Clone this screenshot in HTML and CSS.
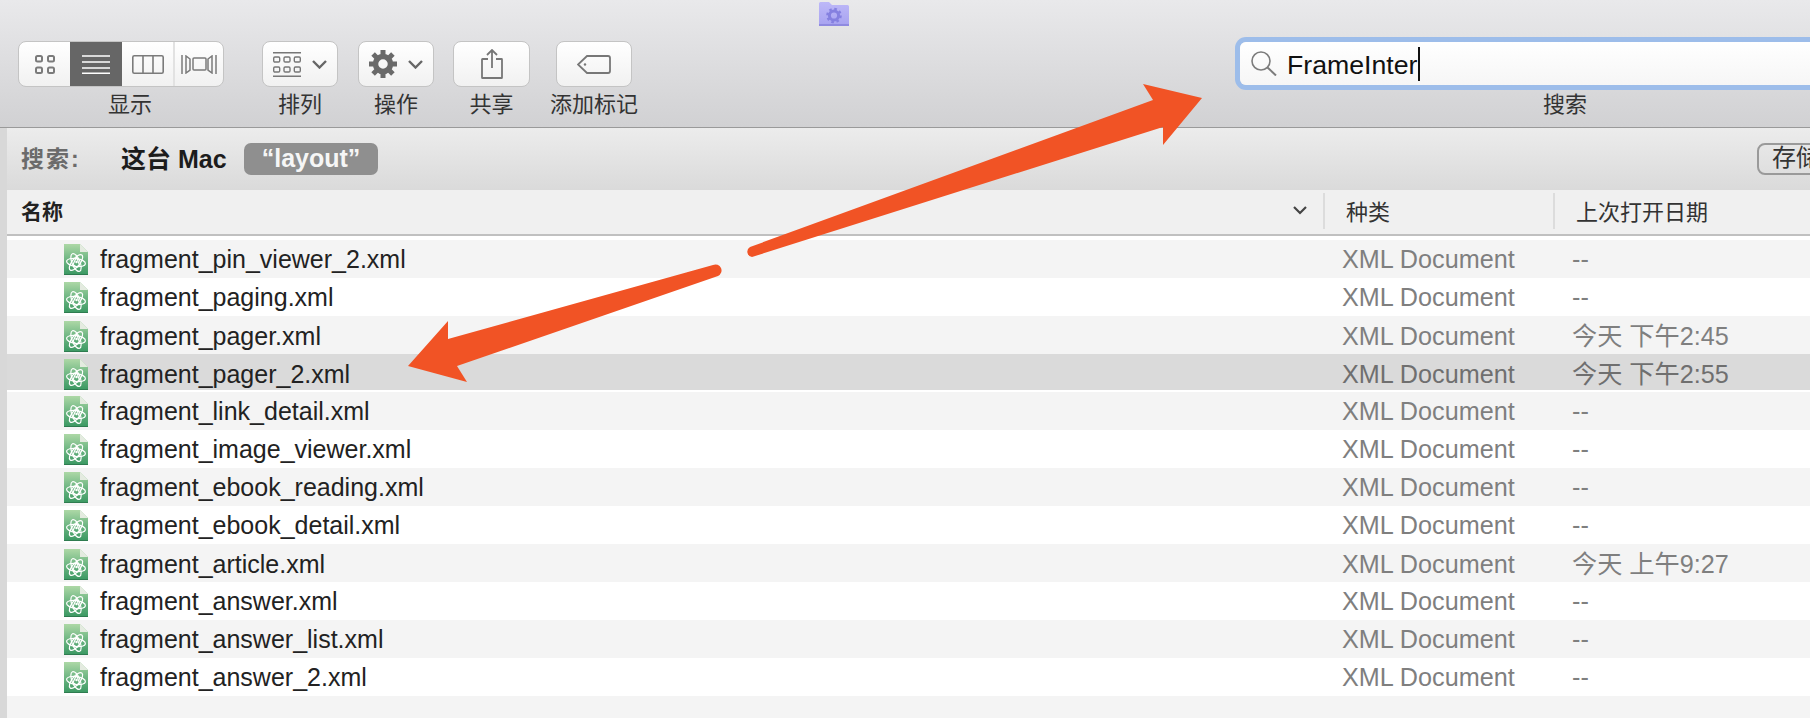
FILE: index.html
```html
<!DOCTYPE html>
<html lang="zh">
<head>
    <meta charset="UTF-8">
    <meta name="viewport" content="width=device-width, initial-scale=1.0">
    <title>搜索 FrameInter</title>
    <link rel="stylesheet" href="styles.css">
</head>
<body>

    <svg class="defs" width="0" height="0">
        <defs>
            <linearGradient id="verde" x1="0" y1="0" x2="0" y2="1">
                <stop offset="0" stop-color="#add8a6"/>
                <stop offset=".45" stop-color="#74b986"/>
                <stop offset="1" stop-color="#3a9862"/>
            </linearGradient>
            <linearGradient id="lila" x1="0" y1="0" x2="0" y2="1">
                <stop offset="0" stop-color="#bdb8f8"/>
                <stop offset="1" stop-color="#a7a2f0"/>
            </linearGradient>
            <symbol id="xml" viewBox="0 0 24 31">
                <path d="M0 0H16L24 8V31H0Z" fill="url(#verde)"/>
                <path d="M16 0L24 8H16Z" fill="#e4ebe0"/>
                <rect x="0" y="30" width="24" height="1" fill="#2f7c50"/>
                <g fill="none" stroke="#fff" stroke-width="1.2">
                    <ellipse cx="12" cy="18.5" rx="9.5" ry="4" transform="rotate(8 12 18.5)"/>
                    <ellipse cx="12" cy="18.5" rx="9.5" ry="4" transform="rotate(68 12 18.5)"/>
                    <ellipse cx="12" cy="18.5" rx="9.5" ry="4" transform="rotate(128 12 18.5)"/>
                    <path d="M9 20.5L12.5 13L15.5 21L12.5 23.5Z"/>
                </g>
                <circle cx="12.5" cy="18" r="1.2" fill="#fff"/>
            </symbol>
        </defs>
    </svg>

    <div class="barra">
        <div class="titulo">
            <svg width="30" height="24" viewBox="0 0 30 24">
                <path d="M0 1.5Q0 0 1.5 0H10L13 3H28.5Q30 3 30 4.5V22.5Q30 24 28.5 24H1.5Q0 24 0 22.5Z" fill="url(#lila)"/>
                <rect y="22" width="30" height="2" fill="#8f8ae0"/>
                <circle cx="15" cy="13.5" r="4.6" fill="none" stroke="#8580e0" stroke-width="3"/>
                <circle cx="15" cy="13.5" r="6.6" fill="none" stroke="#8580e0" stroke-width="2.4" stroke-dasharray="2.6 2.6"/>
            </svg>
        </div>
        <div class="herramientas">
            <div class="grupo">
                <div class="segmentos">
                    <div class="seg seg-1">
                        <svg width="20" height="19" viewBox="0 0 20 19" fill="none" stroke="#7b7b7b" stroke-width="2">
                            <rect x="1" y="1" width="6" height="5.5" rx="1.5"/><rect x="13" y="1" width="6" height="5.5" rx="1.5"/>
                            <rect x="1" y="12.5" width="6" height="5.5" rx="1.5"/><rect x="13" y="12.5" width="6" height="5.5" rx="1.5"/>
                        </svg>
                    </div>
                    <div class="seg seg-activo">
                        <svg width="28" height="19" viewBox="0 0 28 19" stroke="#fff" stroke-width="1.6">
                            <path d="M0 1H28M0 7H28M0 13H28M0 18.2H28"/>
                        </svg>
                    </div>
                    <div class="seg seg-3">
                        <svg width="32" height="19" viewBox="0 0 32 19" fill="none" stroke="#7b7b7b" stroke-width="1.6">
                            <rect x=".8" y=".8" width="30.4" height="17.4" rx="1.5"/><path d="M11 1V18M21 1V18"/>
                        </svg>
                    </div>
                    <div class="seg seg-4">
                        <svg width="36" height="19" viewBox="0 0 36 19" fill="none" stroke="#7b7b7b" stroke-width="1.5">
                            <path d="M1 0V19M5 1V18L9 15V4Z"/><rect x="12" y="3" width="13" height="12" rx="1"/>
                            <path d="M31 1V18L27 15V4ZM35 0V19"/>
                        </svg>
                    </div>
                </div>
                <span class="etiqueta etiqueta-vista">显示</span>
            </div>
            <div class="grupo grupo-orden">
                <div class="boton">
                    <svg width="28" height="25" viewBox="0 0 28 25" fill="none" stroke="#777" stroke-width="1.4">
                        <path d="M0 .8H28M0 24.2H28"/>
                        <rect x=".7" y="5" width="6" height="5" rx="1.2"/><rect x="11" y="5" width="6" height="5" rx="1.2"/><rect x="21.3" y="5" width="6" height="5" rx="1.2"/>
                        <rect x=".7" y="15" width="6" height="5" rx="1.2"/><rect x="11" y="15" width="6" height="5" rx="1.2"/><rect x="21.3" y="15" width="6" height="5" rx="1.2"/>
                    </svg>
                    <svg class="flecha" width="15" height="9" viewBox="0 0 15 9" fill="none" stroke="#666" stroke-width="2.4">
                        <path d="M1 1L7.5 7.5L14 1"/>
                    </svg>
                </div>
                <span class="etiqueta">排列</span>
            </div>
            <div class="grupo grupo-accion">
                <div class="boton">
                    <svg width="28" height="28" viewBox="0 0 28 28" fill="none" stroke="#6a6a6a">
                        <circle cx="14" cy="14" r="7.5" stroke-width="5.5"/>
                        <path d="M14 0V6M14 22V28M0 14H6M22 14H28M4.1 4.1L8.3 8.3M19.7 19.7L23.9 23.9M4.1 23.9L8.3 19.7M19.7 8.3L23.9 4.1" stroke-width="5"/>
                    </svg>
                    <svg class="flecha" width="15" height="9" viewBox="0 0 15 9" fill="none" stroke="#666" stroke-width="2.4">
                        <path d="M1 1L7.5 7.5L14 1"/>
                    </svg>
                </div>
                <span class="etiqueta">操作</span>
            </div>
            <div class="grupo grupo-compartir">
                <div class="boton boton-ancho">
                    <svg width="22" height="30" viewBox="0 0 22 30" fill="none" stroke="#777" stroke-width="1.8">
                        <path d="M7 10H1.5Q1 10 1 10.5V28.4Q1 29 1.5 29H20.5Q21 29 21 28.4V10.5Q21 10 20.5 10H15"/>
                        <path d="M11 19V1M6 6L11 1L16 6"/>
                    </svg>
                </div>
                <span class="etiqueta">共享</span>
            </div>
            <div class="grupo grupo-marca">
                <div class="boton">
                    <svg width="34" height="19" viewBox="0 0 34 19" fill="none" stroke="#777" stroke-width="1.8">
                        <path d="M10 1H31Q33 1 33 3V16Q33 18 31 18H10L1 9.5Z"/>
                        <circle cx="8" cy="9.5" r="1.2" fill="#777" stroke="none"/>
                    </svg>
                </div>
                <span class="etiqueta">添加标记</span>
            </div>
            <div class="grupo grupo-buscar">
                <div class="buscador">
                    <svg width="26" height="25" viewBox="0 0 26 25" fill="none" stroke="#7c7c7c" stroke-width="1.6">
                        <circle cx="10" cy="10" r="9"/><path d="M16.5 16.5L25 24.5" stroke-width="2"/>
                    </svg>
                    <span class="busqueda">FrameInter</span>
                    <span class="cursor"></span>
                </div>
                <span class="etiqueta">搜索</span>
            </div>
        </div>
    </div>

    <div class="cuerpo">
        <div class="borde"></div>
        <div class="principal">
            <div class="filtro">
                <span class="filtro-titulo">搜索:</span>
                <span class="filtro-lugar">这台 Mac</span>
                <span class="pastilla">“layout”</span>
                <span class="guardar">存储</span>
            </div>
            <div class="cabecera">
                <div class="col-nombre">
                    <span>名称</span>
                    <svg width="14" height="9" viewBox="0 0 14 9" fill="none" stroke="#444" stroke-width="2.2">
                        <path d="M1 1L7 7L13 1"/>
                    </svg>
                </div>
                <div class="col-sep">种类</div>
                <div class="col-sep">上次打开日期</div>
            </div>
            <div class="lista">
                <div class="fila"><div class="nombre"><svg class="icono"><use href="#xml"/></svg>fragment_pin_viewer_2.xml</div><div class="tipo">XML Document</div><div class="fecha">--</div></div>
                <div class="fila"><div class="nombre"><svg class="icono"><use href="#xml"/></svg>fragment_paging.xml</div><div class="tipo">XML Document</div><div class="fecha">--</div></div>
                <div class="fila"><div class="nombre"><svg class="icono"><use href="#xml"/></svg>fragment_pager.xml</div><div class="tipo">XML Document</div><div class="fecha fecha-hoy">今天 下午2:45</div></div>
                <div class="fila elegida"><div class="nombre"><svg class="icono"><use href="#xml"/></svg>fragment_pager_2.xml</div><div class="tipo">XML Document</div><div class="fecha fecha-hoy">今天 下午2:55</div></div>
                <div class="fila"><div class="nombre"><svg class="icono"><use href="#xml"/></svg>fragment_link_detail.xml</div><div class="tipo">XML Document</div><div class="fecha">--</div></div>
                <div class="fila"><div class="nombre"><svg class="icono"><use href="#xml"/></svg>fragment_image_viewer.xml</div><div class="tipo">XML Document</div><div class="fecha">--</div></div>
                <div class="fila"><div class="nombre"><svg class="icono"><use href="#xml"/></svg>fragment_ebook_reading.xml</div><div class="tipo">XML Document</div><div class="fecha">--</div></div>
                <div class="fila"><div class="nombre"><svg class="icono"><use href="#xml"/></svg>fragment_ebook_detail.xml</div><div class="tipo">XML Document</div><div class="fecha">--</div></div>
                <div class="fila"><div class="nombre"><svg class="icono"><use href="#xml"/></svg>fragment_article.xml</div><div class="tipo">XML Document</div><div class="fecha fecha-hoy">今天 上午9:27</div></div>
                <div class="fila"><div class="nombre"><svg class="icono"><use href="#xml"/></svg>fragment_answer.xml</div><div class="tipo">XML Document</div><div class="fecha">--</div></div>
                <div class="fila"><div class="nombre"><svg class="icono"><use href="#xml"/></svg>fragment_answer_list.xml</div><div class="tipo">XML Document</div><div class="fecha">--</div></div>
                <div class="fila"><div class="nombre"><svg class="icono"><use href="#xml"/></svg>fragment_answer_2.xml</div><div class="tipo">XML Document</div><div class="fecha">--</div></div>
            </div>
        </div>
    </div>

    <svg class="flechas" width="1810" height="718" viewBox="0 0 1810 718">
        <g fill="#f15325">
            <path d="M750 247L1153 100L1143 84L1202 98L1163 145V127L752 257A5.4 5.4 0 0 1 750 247Z"/>
            <path d="M408 366L448 321V339L713 265A5.6 5.6 0 0 1 718 276L457 366L467 382Z"/>
        </g>
    </svg>

</body>
</html>
```

FILE: styles.css
```css
* {
    box-sizing: border-box;
}
html, body {
    margin: 0;
    height: 718px;
    overflow: hidden;
}
body {
    position: relative;
    font-family: "Liberation Sans", "Noto Sans CJK SC", sans-serif;
    background: #f4f4f4;
    color: #222;
}
.defs {
    display: block;
    height: 0;
}
.barra {
    height: 128px;
    background: linear-gradient(#e9e9eb, #d1d1d3);
    border-bottom: 1px solid #9a9a9a;
    overflow: hidden;
}
.titulo {
    display: flex;
    height: 41px;
    padding: 2px 0 0 819px;
}
.herramientas {
    display: flex;
    align-items: flex-start;
    padding-left: 18px;
    width: 1900px;
}
.grupo {
    display: flex;
    flex-direction: column;
    align-items: center;
}
.grupo-orden { margin-left: 38px; }
.grupo-accion { margin-left: 20px; }
.grupo-compartir { margin-left: 19px; }
.grupo-marca { margin-left: 26px; width: 76px; }
.grupo-buscar { margin-left: 608px; }
.etiqueta {
    margin-top: 3px;
    font-size: 22px;
    line-height: 30px;
    color: #333;
    white-space: nowrap;
}
.etiqueta-vista {
    margin-left: 18px;
}
.segmentos {
    display: flex;
    width: 206px;
    height: 46px;
    background: linear-gradient(#fff, #f1f1f1);
    border: 1px solid #c4c4c4;
    border-radius: 8px;
    overflow: hidden;
}
.seg {
    display: flex;
    align-items: center;
    justify-content: center;
}
.seg-1 { width: 51px; }
.seg-activo { width: 52px; background: #666; }
.seg-3 { width: 51px; }
.seg-4 { flex: 1; border-left: 2px solid #e2e2e2; }
.boton {
    display: flex;
    flex: none;
    align-items: center;
    justify-content: center;
    gap: 11px;
    width: 76px;
    height: 46px;
    background: linear-gradient(#fff, #f1f1f1);
    border: 1px solid #c4c4c4;
    border-radius: 8px;
}
.boton-ancho {
    width: 77px;
}
.buscador {
    display: flex;
    align-items: center;
    width: 650px;
    height: 43px;
    margin-top: 1px;
    margin-bottom: 2px;
    padding-left: 11px;
    background: linear-gradient(#fff, #f6f6f6);
    border-radius: 6px;
    box-shadow: 0 0 0 5px #9dbdea;
}
.busqueda {
    margin: 3px 0 0 10px;
    font-size: 26.7px;
    color: #111;
}
.cursor {
    width: 2px;
    height: 34px;
    background: #111;
}
.cuerpo {
    display: flex;
    height: 590px;
}
.borde {
    width: 7px;
    background: #d8d8d8;
}
.principal {
    flex: 1;
    overflow: hidden;
}
.filtro {
    display: flex;
    align-items: center;
    height: 62px;
    padding-left: 14px;
    background: linear-gradient(#ececec, #dadada);
    font-weight: bold;
    white-space: nowrap;
}
.filtro > span {
    flex: none;
}
.filtro-titulo {
    width: 100px;
    margin-bottom: 4px;
    font-size: 23px;
    letter-spacing: 2px;
    color: #6b6b6b;
}
.filtro-lugar {
    width: 104px;
    margin-bottom: 4px;
    font-size: 25px;
    color: #1c1c1c;
}
.pastilla {
    margin-left: 19px;
    width: 134px;
    height: 32px;
    border-radius: 7px;
    background: #8f8f8f;
    color: #f6f6f6;
    font-size: 25px;
    line-height: 30px;
    text-align: center;
}
.guardar {
    margin-left: 1379px;
    width: 80px;
    height: 32px;
    padding-left: 13px;
    border: 2px solid #9a9a9a;
    border-radius: 8px;
    font-size: 24px;
    font-weight: normal;
    line-height: 26px;
    color: #333;
}
.cabecera {
    display: grid;
    grid-template-columns: 1316px 230px 1fr;
    align-items: center;
    height: 46px;
    padding-bottom: 2px;
    background: #f0f0f0;
    border-bottom: 2px solid #c0c0c0;
    font-size: 22px;
}
.col-nombre {
    display: flex;
    align-items: center;
    justify-content: space-between;
    padding: 0 16px 2px 14px;
    font-size: 21px;
    font-weight: bold;
}
.col-sep {
    display: flex;
    align-items: center;
    height: 36px;
    padding: 0 0 2px 21px;
    border-left: 2px solid #dcdcdc;
    color: #333;
}
.lista {
    padding-top: 4px;
    background: #fff;
}
.fila {
    display: grid;
    grid-template-columns: 1316px 230px 1fr;
    align-items: center;
    height: 38px;
    white-space: nowrap;
}
.fila:nth-child(odd) {
    background: #f4f4f4;
}
.fila.elegida {
    background: #dadada;
    box-shadow: inset 0 -2px #fff;
}
.nombre {
    display: flex;
    align-items: center;
    gap: 12px;
    padding-left: 57px;
    font-size: 25px;
    color: #222;
}
.nombre, .tipo, .fecha {
    padding-top: 1px;
}
.icono {
    width: 24px;
    height: 31px;
    margin-top: -1px;
}
.tipo, .fecha {
    padding-left: 19px;
    font-size: 25.2px;
    color: #7f7f7f;
}
.fecha-hoy {
    padding-top: 0;
    margin-bottom: 4px;
}
.elegida .tipo, .elegida .fecha {
    color: #6f6f6f;
}
.flechas {
    position: absolute;
    top: 0;
    left: 0;
}
```
